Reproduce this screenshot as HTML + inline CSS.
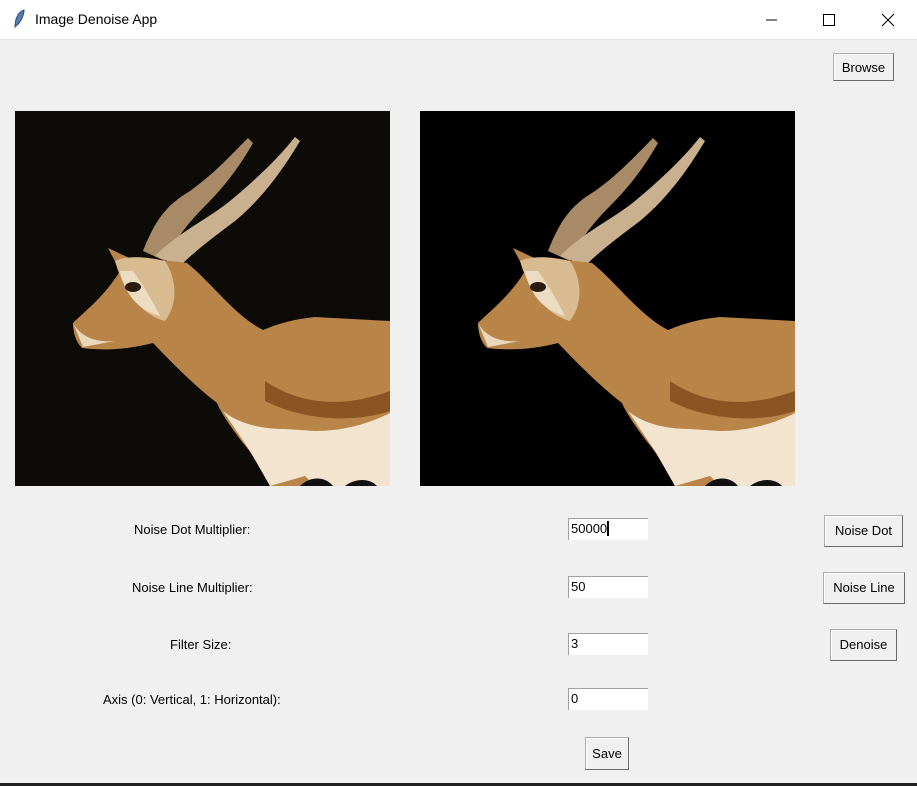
<!DOCTYPE html>
<html><head><style>
body{margin:0;width:917px;height:786px;background:#f0f0f0;font-family:"Liberation Sans",sans-serif;font-size:13px;position:relative;overflow:hidden;color:#000}
.tb{position:absolute;left:0;top:0;width:917px;height:39px;background:#fff;border-bottom:1px solid #e4e4e4}
.t{position:absolute;left:35px;top:11px;font-size:14px}
.btn{position:absolute;background:#f0f0f0;border:1px solid #adadad;border-right-color:#696969;border-bottom-color:#696969;box-shadow:inset 1px 1px #fff;font-size:13px;text-align:center;line-height:28px;height:28px;box-sizing:border-box}
.lbl{position:absolute;font-size:13px}
.ent{position:absolute;left:568px;width:80px;height:22px;background:#fff;border-top:1px solid #a0a0a0;border-left:1px solid #a0a0a0;box-sizing:border-box;font-size:13px;padding-left:2px;line-height:20px}
.img{position:absolute;top:111px;width:375px;height:375px}
</style></head><body>
<div class="tb">
<svg style="position:absolute;left:12px;top:9px" width="14" height="20" viewBox="0 0 14 20"><path d="M3 18 C3 10 6 3 12 1 C12 7 8 14 4 17 Z" fill="#5a7fb5" stroke="#2f4a78"/></svg>
<div class="t">Image Denoise App</div>
<svg style="position:absolute;left:760px;top:12px" width="140" height="16"><line x1="6" y1="8" x2="17" y2="8" stroke="#000"/><rect x="63.5" y="2.5" width="11" height="11" fill="none" stroke="#000"/><path d="M122 2 L134 14 M134 2 L122 14" stroke="#000"/></svg>
</div>
<div class="btn" style="left:833px;top:53px;width:61px">Browse</div>
<svg width="0" height="0" style="position:absolute"><defs>
<g id="ant">
<path d="M128 140 C140 110 150 95 175 80 C200 62 215 45 233 27 L238 32 C225 55 210 75 190 95 C170 115 160 130 150 150 Z" fill="#a98a66"/>
<path d="M140 145 C165 120 190 110 215 90 C245 65 265 45 280 26 L285 30 C270 55 250 85 220 110 C200 125 180 140 165 155 Z" fill="#c9b08f"/>
<path d="M93 137 L125 152 C140 148 160 150 172 152 C195 170 220 205 248 219 C265 212 280 208 300 206 L375 210 L375 375 L255 375 C245 355 235 340 228 332 C215 315 205 300 202 292 C180 275 160 255 138 232 C115 238 90 240 67 237 C60 230 58 220 58 212 C70 200 90 185 105 160 C100 150 96 143 93 137 Z" fill="#b98447"/>
<path d="M100 150 C110 185 130 205 150 210 C165 190 160 165 150 150 C130 145 110 145 100 150 Z" fill="#d9bb92"/>
<path d="M105 160 C110 185 125 200 145 205 C135 185 125 170 118 160 Z" fill="#ecdcc2"/>
<path d="M58 212 C65 225 80 232 100 230 L68 236 Z" fill="#ead8bd"/>
<path d="M208 300 C220 310 240 318 270 318 L300 320 C330 320 355 312 375 302 L375 375 L300 375 L290 365 L255 375 L235 340 Z" fill="#f2e4cf"/>
<path d="M250 270 C280 290 320 300 375 280 L375 300 C340 312 290 310 250 290 Z" fill="#8a5523"/>
<ellipse cx="118" cy="176" rx="8" ry="5" fill="#2a1a10"/>
<path d="M285 375 C295 365 310 365 318 375 Z M330 375 C340 367 355 367 362 375 Z" fill="#111"/>
</g></defs></svg>
<svg class="img" style="left:15px" viewBox="0 0 375 375"><rect width="375" height="375" fill="#0d0b08"/><use href="#ant"/></svg>
<svg class="img" style="left:420px" viewBox="0 0 375 375"><rect width="375" height="375" fill="#000"/><use href="#ant"/></svg>
<div class="lbl" style="left:134px;top:522px">Noise Dot Multiplier:</div>
<div class="lbl" style="left:132px;top:580px">Noise Line Multiplier:</div>
<div class="lbl" style="left:170px;top:637px">Filter Size:</div>
<div class="lbl" style="left:103px;top:692px">Axis (0: Vertical, 1: Horizontal):</div>
<div class="ent" style="top:518px">50000<span style="display:inline-block;width:2px;height:15px;background:#000;vertical-align:-3px"></span></div>
<div class="ent" style="top:576px">50</div>
<div class="ent" style="top:633px">3</div>
<div class="ent" style="top:688px">0</div>
<div class="btn" style="left:824px;top:515px;width:79px;height:32px;line-height:30px">Noise Dot</div>
<div class="btn" style="left:823px;top:572px;width:82px;height:32px;line-height:30px">Noise Line</div>
<div class="btn" style="left:830px;top:629px;width:67px;height:32px;line-height:30px">Denoise</div>
<div class="btn" style="left:585px;top:737px;width:44px;height:33px;line-height:31px">Save</div>
<div style="position:absolute;left:0;top:783px;width:917px;height:3px;background:#222"></div>
</body></html>
